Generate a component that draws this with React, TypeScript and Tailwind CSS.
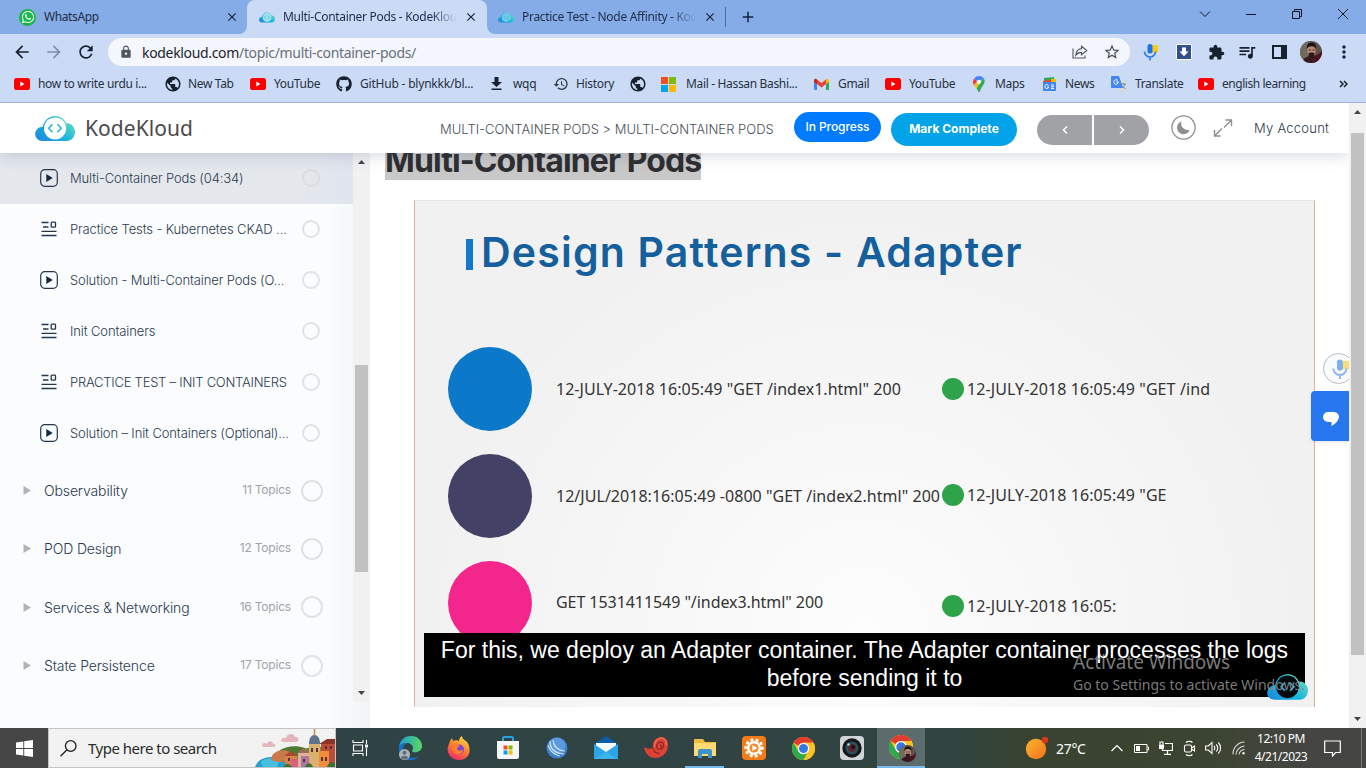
import React, { useId } from "react";
import { FaWhatsapp, FaGithub } from "react-icons/fa";
import {
  MdArrowBack, MdArrowForward, MdRefresh, MdLock, MdStarBorder, MdExtension, MdQueueMusic,
  MdMoreVert, MdPublic, MdHistory, MdClose, MdAdd,
} from "react-icons/md";

/* ---------- shared drawings ---------- */

function Cloud({ className, inner = "#fff" }: { className: string; inner?: string }) {
  const id = useId();
  return (
    <svg className={className} viewBox="0 0 40 25">
      <defs>
        <linearGradient id={id} x1="0" y1="1" x2="1" y2="0.3">
          <stop offset="0" stopColor="#1a86dc" />
          <stop offset="0.55" stopColor="#17b4dc" />
          <stop offset="1" stopColor="#62d8c4" />
        </linearGradient>
      </defs>
      <path d="M7 25a7 7 0 0 1-1-13.900c1-.3 2.500-.3 3-.2A11.500 11.500 0 0 1 31 7.300C36 6.500 40 11 40 16c0 5-3.500 9-8.500 9Z" fill={`url(#${id})`} />
      <circle cx="20" cy="12.300" r="12.200" fill={`url(#${id})`} />
      <circle cx="20" cy="12.400" r="11" fill={inner} />
      <path d="M17.500 8.300 13.700 12.300 17.500 16.300M22.500 8.300l3.800 4-3.800 4" fill="none" stroke="#24b4d8" strokeWidth="1.500" />
    </svg>
  );
}

function YouTube() {
  return (
    <svg className="h-[12px] w-[16px] shrink-0" viewBox="0 0 16 12">
      <rect width="16" height="12" rx="2.500" fill="#f00" />
      <path d="M6.300 3.600v4.800L10.500 6Z" fill="#fff" />
    </svg>
  );
}

function Face({ className }: { className: string }) {
  return (
    <svg className={className} viewBox="0 0 22 22">
      <clipPath id="face"><circle cx="11" cy="11" r="11" /></clipPath>
      <g clipPath="url(#face)">
        <rect width="22" height="22" fill="#5d5149" />
        <path d="M0 0h8v22H0Z" fill="#6f6b5e" />
        <path d="M2 22c1-5 5-7 9-7s9 2 11 7Z" fill="#3a1820" />
        <path d="M14 15c4-1 7-3 8-6v13h-8Z" fill="#4e1420" />
        <ellipse cx="11.500" cy="9.500" rx="4.200" ry="5.700" fill="#b98873" />
        <path d="M6.800 8C6.500 3 9 1.600 12 1.800c3.500.2 4.500 3 4 6.400-1-2.200-2-3-4.500-3-2.200 0-3.700.6-4.700 2.800Z" fill="#1b1413" />
        <path d="M8.500 12c1.500-.8 4.500-.8 6 0l-.8 3.500c-1 1-3.400 1-4.400 0Z" fill="#2b1a18" />
        <path d="M9 9h2M12.500 9h2" stroke="#241513" strokeWidth=".9" />
      </g>
    </svg>
  );
}

function Mic({ className }: { className: string }) {
  return (
    <svg className={className} viewBox="0 0 16 18">
      <rect x="9" y="2" width="6.500" height="7.500" rx="1" fill="#fbc817" />
      <rect x="5" y="1" width="5" height="9.500" rx="2.500" fill="#1a73e8" />
      <path d="M2 8.500a5.500 5.500 0 0 0 11 0M7.500 14v3.500" fill="none" stroke="#2f80ea" strokeWidth="1.700" />
    </svg>
  );
}

function Chrome({ className }: { className: string }) {
  return (
    <svg className={className} viewBox="0 0 24 24">
      <circle cx="12" cy="12" r="12" fill="#fcc31e" />
      <path d="M1.600 6A12 12 0 0 1 22.400 6H12A6 6 0 0 0 6.800 9Z" fill="#e33b2e" />
      <path d="M1.600 6A12 12 0 0 0 12 24l5.200-9A6 6 0 0 1 6.800 15Z" fill="#2da94f" />
      <path d="M22.400 6H12l5.200 9L12 24A12 12 0 0 0 22.400 6Z" fill="#fcc31e" />
      <circle cx="12" cy="12" r="6" fill="#fff" />
      <circle cx="12" cy="12" r="4.700" fill="#3577e5" />
    </svg>
  );
}

/* ---------- browser chrome ---------- */

function TabStrip() {
  return (
    <div className="flex h-[34px] bg-[#cbdbf6] text-[12px] tracking-[-0.3px] text-[#1c2c47]">
      <div className="flex w-[247px] items-center rounded-br-[8px] bg-[#86ace8] pl-[19px]">
        <span className="flex size-[17px] items-center justify-center rounded-full bg-[#18b84b] text-white">
          <FaWhatsapp className="size-[14px]" />
        </span>
        <span className="ml-[8px] w-[181px] text-[12px] tracking-[-0.4px]">WhatsApp</span>
        <MdClose className="size-[14px] text-[#16233a]" />
      </div>
      <div className="flex w-[240px] bg-[#86ace8]">
        <div className="flex w-[240px] items-center rounded-t-[8px] bg-[#cbdbf6] pl-[12px]">
          <Cloud className="h-[11px] w-[16px]" inner="#9fe0f2" />
          <span className="ml-[8px] mr-[7px] w-[174px] overflow-hidden whitespace-nowrap [mask-image:linear-gradient(to_right,black_85%,transparent)]">
            Multi-Container Pods - KodeKloud
          </span>
          <MdClose className="size-[14px] text-[#16233a]" />
        </div>
      </div>
      <div className="flex flex-1 rounded-bl-[8px] bg-[#86ace8]">
        <div className="flex w-[238px] items-center pl-[11px]">
          <Cloud className="h-[11px] w-[16px]" inner="#6fc8ec" />
          <span className="ml-[8px] mr-[7px] w-[174px] overflow-hidden whitespace-nowrap [mask-image:linear-gradient(to_right,black_85%,transparent)]">
            Practice Test - Node Affinity - KodeKloud
          </span>
          <MdClose className="size-[14px] text-[#16233a]" />
        </div>
        <span className="mt-[7px] h-[20px] w-px bg-[#4a6ea8]" />
        <MdAdd className="ml-[13px] mt-[8px] size-[18px] text-[#16233a]" />
        <div className="ml-auto flex items-start pt-[8px] text-[#101828]">
          <svg className="mr-[34px] h-[12px] w-[12px]" viewBox="0 0 12 12" fill="none" stroke="currentColor"><path d="M1 3.500 6 8.500l5-5" /></svg>
          <svg className="mr-[34px] h-[12px] w-[12px]" viewBox="0 0 12 12" fill="none" stroke="currentColor"><path d="M1 6.500h10" /></svg>
          <svg className="mr-[34px] h-[12px] w-[12px]" viewBox="0 0 12 12" fill="none" stroke="currentColor"><path d="M1.500 3.500h7v7h-7ZM3.500 3.500v-2h7v7h-2" /></svg>
          <svg className="mr-[17px] h-[12px] w-[12px]" viewBox="0 0 12 12" fill="none" stroke="currentColor"><path d="m1 1 10 10M11 1 1 11" /></svg>
        </div>
      </div>
    </div>
  );
}

function Toolbar() {
  return (
    <div className="flex h-[36px] items-center bg-[#cbdbf6] pl-[12px] text-[#17202e]">
      <MdArrowBack className="size-[20px]" />
      <MdArrowForward className="ml-[12px] size-[20px] text-[#8090ac]" />
      <MdRefresh className="ml-[12px] size-[20px]" />
      <div className="ml-[12px] flex h-[28px] w-[1022px] items-center rounded-full bg-[#f4f7fd] pl-[11px]">
        <MdLock className="size-[14px] text-[#50555e]" />
        <span className="ml-[9px] text-[14px] tracking-[-0.33px] text-[#6a6f79]">
          <span className="text-[#1e2329]">kodekloud.com</span>/topic/multi-container-pods/
        </span>
        <svg className="ml-auto h-[14px] w-[16px]" viewBox="0 0 16 14" fill="none" stroke="#50555e" strokeWidth="1.100">
          <path d="M1 3.500v9.500h12v-2.500M9.500 1.200l5.300 4.300L9.500 9.800V7.400C6.500 7.400 5 8.400 3.800 10.300 4 6.500 6 4 9.500 3.600Z" />
        </svg>
        <MdStarBorder className="mr-[9px] ml-[15px] size-[18px] text-[#454a53]" />
      </div>
      <Mic className="ml-[12px] h-[18px] w-[17px]" />
      <svg className="ml-[17px] h-[16px] w-[16px]" viewBox="0 0 16 16">
        <rect width="16" height="16" fill="#fff" /><rect x="1" y="1" width="14" height="14" fill="#33508c" />
        <path d="M6 3.500h4v4h2.500L8 12.300 3.500 7.500H6Z" fill="#fff" />
      </svg>
      <MdExtension className="ml-[16px] size-[17px]" />
      <MdQueueMusic className="ml-[12px] size-[20px]" />
      <svg className="ml-[15px] h-[14px] w-[15px]" viewBox="0 0 15 14"><path d="M0 0h15v14H0ZM2 2v10h7V2Z" fill="#17202e" fillRule="evenodd" /></svg>
      <Face className="ml-[13px] size-[22px]" />
      <MdMoreVert className="ml-[12px] size-[20px]" />
    </div>
  );
}

function Bookmark({ icon, label, className }: { icon: React.ReactNode; label?: string; className: string }) {
  return (
    <div className={`flex shrink-0 items-center whitespace-nowrap ${className}`}>
      {icon}
      {label && <span>{label}</span>}
    </div>
  );
}

const Globe = () => <MdPublic className="-mx-[2px] size-[18px] shrink-0 text-[#16202e]" />;

function Bookmarks() {
  return (
    <div className="flex h-[33px] items-center border-b border-[#9fb2d6] bg-[#cbdbf6] pb-[4px] pl-[14px] text-[12px] tracking-[-0.34px] text-[#26303f]">
      <Bookmark className="w-[152px] gap-[8px]" icon={<YouTube />} label="how to write urdu i..." />
      <Bookmark className="w-[84px] gap-[8px]" icon={<Globe />} label="New Tab" />
      <Bookmark className="w-[86px] gap-[8px]" icon={<YouTube />} label="YouTube" />
      <Bookmark className="w-[155px] gap-[8px] tracking-[-0.2px]" icon={<FaGithub className="size-[16px] text-[#16202e]" />} label="GitHub - blynkkk/bl..." />
      <Bookmark className="w-[62px] gap-[11px]" icon={<svg className="h-[14px] w-[11px]" viewBox="0 0 11 14" fill="#16202e"><path d="M3.500 0h4v5H11L5.500 10 0 5h3.500ZM.5 11.500h10v1.500H.5Z" /></svg>} label="wqq" />
      <Bookmark className="w-[78px] gap-[7px]" icon={<MdHistory className="size-[16px] text-[#26303f]" />} label="History" />
      <Bookmark className="w-[30px]" icon={<Globe />} />
      <Bookmark
        className="w-[153px] gap-[10px]"
        icon={<svg className="h-[15px] w-[15px]" viewBox="0 0 15 15"><path d="M0 0h7v7H0Z" fill="#f25022" /><path d="M8 0h7v7H8Z" fill="#7fba00" /><path d="M0 8h7v7H0Z" fill="#00a4ef" /><path d="M8 8h7v7H8Z" fill="#ffb900" /></svg>}
        label="Mail - Hassan Bashi..."
      />
      <Bookmark
        className="w-[71px] gap-[9px]"
        icon={<svg className="h-[12px] w-[15px]" viewBox="0 0 15 12"><path d="M0 2h3v10H1a1 1 0 0 1-1-1Z" fill="#4285f4" /><path d="M12 2h3v9a1 1 0 0 1-1 1h-2Z" fill="#34a853" /><path d="M3 1.500 7.500 5 12 1.500V6L7.500 9.500 3 6Z" fill="#ea4335" /><path d="M12 1.500C13.500 0 15 1 15 2.500V4l-3 2Z" fill="#fbbc04" /><path d="M3 1.500C1.500 0 0 1 0 2.500V4l3 2Z" fill="#c5221f" /></svg>}
        label="Gmail"
      />
      <Bookmark className="w-[88px] gap-[8px]" icon={<YouTube />} label="YouTube" />
      <Bookmark
        className="w-[69px] gap-[10px]"
        icon={<svg className="h-[16px] w-[12px]" viewBox="0 0 12 16"><path d="M6 0a6 6 0 0 1 4.600 2.100L5.900 7.600 1.400 2.200A6 6 0 0 1 6 0Z" fill="#4285f4" /><path d="M1.400 2.200 4 5.500 1 9.200A6 6 0 0 1 1.400 2.200Z" fill="#ea4335" /><path d="M1 9.200 8 4.500l-4.500 8Z" fill="#fbbc04" /><path d="M10.600 2.100C13.500 6.500 10 9 8 12.500 7 14.500 7 16 6 16s-1-2-2.500-3.500Z" fill="#34a853" /><circle cx="6" cy="5.800" r="2.100" fill="#fff" /></svg>}
        label="Maps"
      />
      <Bookmark
        className="w-[69px] gap-[8px]"
        icon={<svg className="h-[14px] w-[15px]" viewBox="0 0 15 14"><path d="M2 1 12 0v6H2Z" fill="#34a853" /><path d="m1 4 13-2v6H1Z" fill="#ea4335" /><path d="M9 2h5v5H9Z" fill="#fbbc04" /><rect x="1" y="5" width="13" height="9" rx="1" fill="#4285f4" /><path d="M6.500 8.500a2 2 0 1 0 .3 1.500H5M9 8h3M9 9.800h3M9 11.500h3" fill="none" stroke="#fff" /></svg>}
        label="News"
      />
      <Bookmark
        className="w-[87px] gap-[8px]"
        icon={<svg className="h-[16px] w-[16px]" viewBox="0 0 16 16"><rect x="7" y="4" width="9" height="12" rx="1" fill="#d5d8dc" /><path d="M0 1a1 1 0 0 1 1-1h7l4 12H1a1 1 0 0 1-1-1Z" fill="#4285f4" /><path d="M7 4.700A2.300 2.300 0 1 0 7.400 6H5" fill="none" stroke="#fff" /><path d="M10 8h5M12.500 7v1M14 8c-.5 2-1.500 3-3 4M11 9.500l3.500 3.500" stroke="#607d9b" fill="none" strokeWidth=".8" /></svg>}
        label="Translate"
      />
      <Bookmark className="w-[141px] gap-[8px] tracking-[-0.45px]" icon={<YouTube />} label="english learning" />
      <svg className="h-[8px] w-[9px]" viewBox="0 0 9 8" fill="none" stroke="#16202e" strokeWidth="1.500"><path d="m1 1 3 3-3 3M5 1l3 3-3 3" /></svg>
    </div>
  );
}

/* ---------- course page ---------- */

function Header() {
  return (
    <header className="relative z-10 flex h-[50px] shrink-0 items-center bg-white font-[Inter,sans-serif] shadow-[0_3px_14px_rgba(60,75,110,0.2)]">
      <Cloud className="ml-[35px] h-[25px] w-[40px]" />
      <span className="ml-[10px] w-[355px] pt-[2px] font-['Noto_Sans',sans-serif] text-[21px] tracking-[0.05px] text-[#4a4a4c]">KodeKloud</span>
      <span className="w-[354px] whitespace-nowrap pt-[3px] text-[13px] font-light tracking-[0.02px] text-[#4a5058]">
        MULTI-CONTAINER PODS &gt; MULTI-CONTAINER PODS
      </span>
      <span className="mb-[2px] flex h-[30px] w-[87px] items-center justify-center rounded-full bg-[#007bff] text-[12px] font-medium tracking-[-0.1px] text-white">In Progress</span>
      <span className="ml-[10px] mt-[2px] flex h-[33px] w-[126px] items-center justify-center rounded-full bg-[#02a3e8] text-[12px] font-bold text-white">Mark Complete</span>
      <div className="ml-[20px] mt-[4px] flex gap-[2px]">
        <span className="flex h-[30px] w-[55px] items-center justify-center rounded-l-full bg-[#a1a2a5]">
          <svg className="h-[8px] w-[6px]" viewBox="0 0 6 8" fill="none" stroke="#fff" strokeWidth="1.500"><path d="M5 .5 1.500 4 5 7.500" /></svg>
        </span>
        <span className="flex h-[30px] w-[55px] items-center justify-center rounded-r-full bg-[#a1a2a5]">
          <svg className="h-[8px] w-[6px]" viewBox="0 0 6 8" fill="none" stroke="#fff" strokeWidth="1.500"><path d="M1 .5 4.500 4 1 7.500" /></svg>
        </span>
      </div>
      <svg className="mb-[2px] ml-[22px] h-[25px] w-[25px]" viewBox="0 0 25 25">
        <circle cx="12.500" cy="12.500" r="11.600" fill="none" stroke="#8e8f92" strokeWidth="1.300" />
        <path d="M10.500 6.500a6.500 6.500 0 0 0 8.200 8.200A6.500 6.500 0 1 1 10.500 6.500Z" fill="#8e8f92" />
      </svg>
      <svg className="mb-[1px] ml-[17px] h-[20px] w-[20px]" viewBox="0 0 20 20" fill="none" stroke="#8e8f92" strokeWidth="1.400">
        <path d="M12.500 2H18.500V8M18 2.500 11 9.500M7.500 18H1.500V12M2 17.500 9 10.500" />
      </svg>
      <span className="ml-[21px] whitespace-nowrap pt-px text-[13px] font-light tracking-[0.25px] text-[#2d3747]">My Account</span>
    </header>
  );
}

const PlayIcon = () => (
  <svg className="h-[18px] w-[18px] shrink-0" viewBox="0 0 18 18">
    <rect x=".7" y=".7" width="16.600" height="16.600" rx="4" fill="none" stroke="#25364d" strokeWidth="1.200" />
    <path d="M6.300 5v8l6.400-4Z" fill="#14253c" />
  </svg>
);
const ListIcon = () => (
  <svg className="h-[16px] w-[18px] shrink-0" viewBox="0 0 18 16" fill="none" stroke="#25364d" strokeWidth="1.300">
    <path d="M1.500 1.500H8.500M3 6H8.500M1.500 10.300h15M1.500 14.500h15" />
    <rect x="11.200" y="1.200" width="4.300" height="5" rx=".8" />
  </svg>
);

const lessons = [
  { play: true, label: "Multi-Container Pods (04:34)", active: true },
  { play: false, label: "Practice Tests - Kubernetes CKAD ..." },
  { play: true, label: "Solution - Multi-Container Pods (O..." },
  { play: false, label: "Init Containers" },
  { play: false, label: "PRACTICE TEST – INIT CONTAINERS", tight: true },
  { play: true, label: "Solution – Init Containers (Optional)..." },
];
const sections = [
  { label: "Observability", topics: "11 Topics" },
  { label: "POD Design", topics: "12 Topics" },
  { label: "Services & Networking", topics: "16 Topics" },
  { label: "State Persistence", topics: "17 Topics" },
];

function Sidebar() {
  return (
    <aside className="flex w-[370px] shrink-0 bg-[linear-gradient(to_right,#fafcfe_325px,#f5f8fb_353px,#f2f4f7)] font-[Inter,sans-serif] text-[#2c3a4e]">
      <div className="w-[353px]">
        {lessons.map((l) => (
          <div key={l.label} className={`flex h-[51px] items-center pb-px pl-[40px] ${l.active ? "bg-[linear-gradient(to_right,#e4e8ed_300px,#e0e4ee)]" : ""}`}>
            {l.play ? <PlayIcon /> : <ListIcon />}
            <span className={`ml-[12px] w-[232px] whitespace-nowrap pt-[2px] text-[13px] font-light ${l.tight ? "tracking-[-0.24px]" : "tracking-[-0.12px]"}`}>{l.label}</span>
            <span className={`size-[18px] rounded-full border-2 ${l.active ? "border-[#dadde2]" : "border-[#e0e2e5]"}`} />
          </div>
        ))}
        <div className="h-[3px]" />
        {sections.map((s) => (
          <div key={s.label} className="flex h-[58.3px] items-center pb-px pl-[23px]">
            <svg className="h-[9px] w-[8px]" viewBox="0 0 8 9"><path d="M.5 0v9L8 4.500Z" fill="#b3b4b7" /></svg>
            <span className="ml-[13px] flex-1 whitespace-nowrap text-[14px] font-light tracking-[-0.13px]">{s.label}</span>
            <span className="mb-px text-[12px] tracking-[-0.2px] text-[#a0a3a8]">{s.topics}</span>
            <span className="ml-[10px] mr-[30px] size-[22px] rounded-full border-2 border-[#e0e2e5]" />
          </div>
        ))}
      </div>
      <div className="flex h-[549px] w-[17px] flex-col items-center bg-[#f1f1f1]">
        <svg className="mt-[7px] h-[4px] w-[7px]" viewBox="0 0 7 4"><path d="M0 4h7L3.500 0Z" fill="#444" /></svg>
        <div className="mt-[201px] h-[207px] w-[13px] bg-[#c1c1c1]" />
        <svg className="mb-[7px] mt-auto h-[4px] w-[7px]" viewBox="0 0 7 4"><path d="M0 0h7L3.500 4Z" fill="#444" /></svg>
      </div>
    </aside>
  );
}

const logs = [
  { dot: "bg-[#0b78ca]", from: '12-JULY-2018 16:05:49 "GET /index1.html" 200', to: '12-JULY-2018 16:05:49 "GET /ind' },
  { dot: "bg-[#444167]", from: '12/JUL/2018:16:05:49 -0800 "GET /index2.html" 200', to: '12-JULY-2018 16:05:49 "GE', shift: "mb-[2px]" },
  { dot: "bg-[#f2268b]", from: 'GET 1531411549 "/index3.html" 200', to: "12-JULY-2018 16:05:", lift: "pb-[2px] tracking-[-0.06px]", shift: "mt-[5px]" },
];

function Slide() {
  return (
    <div className="relative ml-[44px] mt-[20px] h-[507px] w-[901px] overflow-hidden border-x border-t border-x-[#e3b09a] border-t-[#e9e4e3] bg-[radial-gradient(ellipse_at_50%_85%,#fdfdfd_0%,#f6f6f6_40%,#f1f1f1_70%)]">
      <div className="flex items-center pl-[51px] pt-[23px]">
        <span className="mt-[5px] h-[31px] w-[7px] bg-[#1378cc]" />
        <span className="ml-[8px] whitespace-nowrap font-[Inter,sans-serif] text-[41px] font-semibold leading-[56px] tracking-[1.2px] text-[#145f9c]">Design Patterns - Adapter</span>
      </div>
      <div className="mt-[67px] flex flex-col gap-[23px] pl-[33px]">
        {logs.map((l) => (
          <div key={l.from} className="flex h-[84px] items-center whitespace-nowrap text-[16px] tracking-[0.03px] text-[#333]">
            <span className={`size-[84px] rounded-full ${l.dot}`} />
            <span className={`ml-[24px] w-[386px] ${l.lift ?? ""}`}>{l.from}</span>
            <span className={`flex items-center tracking-[0.1px] ${l.shift ?? ""}`}>
              <span className="mr-[3px] size-[22px] rounded-full bg-[#2fa34a]" />
              {l.to}
            </span>
          </div>
        ))}
      </div>
      <div className="absolute left-[9px] top-[432px] h-[64px] w-[881px] whitespace-nowrap bg-black pt-[3px] text-center font-['Liberation_Sans',Arial,sans-serif] text-[23px] leading-[28px] text-white">
        For this, we deploy an Adapter container. The Adapter container processes the logs
        <br />
        before sending it to
      </div>
      <Cloud className="absolute left-[852px] top-[473px] h-[26px] w-[41px]" inner="#020a0e" />
      <div className="absolute left-[658px] top-[447px] whitespace-nowrap text-[#8a8b8b]/90">
        <div className="text-[19px] leading-[28px]">Activate Windows</div>
        <div className="text-[14px] leading-[18px]">Go to Settings to activate Windows.</div>
      </div>
      <span className="absolute bottom-0 left-[-1px] h-[23px] w-px bg-[#555]" />
      <span className="absolute bottom-0 right-[-1px] h-[23px] w-px bg-[#888]" />
    </div>
  );
}

function Page() {
  return (
    <div className="flex h-[625px] bg-white">
      <div className="relative flex w-[1349px] flex-col overflow-hidden">
        <Header />
        <div className="flex min-h-0 flex-1">
          <Sidebar />
          <main className="min-w-0 flex-1">
            <h1 className="ml-[15px] mt-[-12px] h-[39px] w-[316px] whitespace-nowrap bg-[#c8c8c8] font-[Inter,sans-serif] text-[32px] font-bold leading-[39px] tracking-[-0.9px] text-[#2e2e30]">
              Multi-Container Pods
            </h1>
            <Slide />
          </main>
        </div>
        <div className="absolute left-[1323px] top-[250px] flex size-[31px] items-center rounded-full border border-[#b9bcc2] bg-[#fafbfc] pl-[7px]">
          <Mic className="h-[22px] w-[19px] shrink-0 opacity-55" />
        </div>
        <div className="absolute right-0 top-[288px] flex h-[50px] w-[38px] items-center justify-center rounded-l-[4px] bg-[#2777f0] pl-[2px] shadow">
          <svg className="mt-[6px] h-[14px] w-[16px]" viewBox="0 0 16 14"><path d="M5 0h6a5 5 0 0 1 4.700 6.500C14.500 9.500 12 12 8.500 14v-4H5A5 5 0 0 1 5 0Z" fill="#fff" /></svg>
        </div>
      </div>
      <div className="flex w-[17px] flex-col items-center bg-[#f1f1f1]">
        <svg className="mt-[7px] h-[4px] w-[7px]" viewBox="0 0 7 4"><path d="M0 4h7L3.500 0Z" fill="#444" /></svg>
        <div className="mt-[19px] h-[522px] w-[13px] bg-[#c1c1c1]" />
        <svg className="mb-[7px] mt-auto h-[4px] w-[7px]" viewBox="0 0 7 4"><path d="M0 0h7L3.500 4Z" fill="#444" /></svg>
      </div>
    </div>
  );
}

/* ---------- taskbar ---------- */

function Town() {
  return (
    <svg className="ml-auto h-[38px] w-[80px]" viewBox="0 0 80 38">
      <path d="M7 17c0-3 3-4 5-2 1-4 6-3 6 0 3-1 3 3 1 3H8ZM26 12c0-3 3-4 5-3 1-5 8-5 9-1 3-1 5 4 2 5H28Z" fill="#e3b5bd" />
      <path d="M15 38c5-10 12-15 25-16 10-4 25-5 40-4v20Z" fill="#6e8d3a" />
      <path d="M25 21c7-4 16-5 25-2v8H24Z" fill="#4f7a33" />
      <path d="M0 38c3-8 10-10 18-10 10 0 16 5 14 10Z" fill="#2a9fd0" />
      <path d="M6 33c5-5 14-4 18 0l-2 5H8Z" fill="#46bfe2" />
      <path d="M17 27c3-6 12-7 18-4l-2 9c-5 2-12 1-17-1Z" fill="#c9794a" />
      <path d="M30 26h12v12H30Z" fill="#d4834b" /><path d="m29 27 7-5 7 5Z" fill="#a9492f" />
      <path d="M43 23h11v15H43Z" fill="#e0b29a" /><path d="m42 24 6-5 7 5Z" fill="#9d6a58" />
      <path d="M54 15h11v23H54Z" fill="#dcb071" />
      <path d="M54 15c0-7 3-9 5.500-9S65 8 65 15Z" fill="#5f7389" /><path d="M59.500 0v7" stroke="#b98d45" strokeWidth="1.500" />
      <path d="M66 14h14v24H66Z" fill="#bd4c39" /><path d="M64 15 72 10h8v5Z" fill="#8e3328" />
      <path d="M64 22h10v16H64Z" fill="#ef8f3b" /><path d="M46 27h8v11h-8Z" fill="#a9779f" />
      <path d="M36 30h7v8h-7Z" fill="#d7607c" /><path d="M56 19h2v4h-2ZM61 19h2v4h-2ZM66 28h2v4h-2ZM70 28h2v4h-2ZM70 17h2v3h-2ZM75 17h2v3h-2ZM48 30h2v3h-2ZM33 29h2v3h-2Z" fill="#5a3038" />
      <path d="M28 38c2-4 7-4 9 0ZM50 38c2-5 6-5 8 0ZM72 38c2-6 6-6 8-3v3Z" fill="#3e7033" />
    </svg>
  );
}

const apps: { key: string; node: React.ReactNode; className?: string }[] = [
  { key: "edge", node: (
    <svg className="size-[24px]" viewBox="0 0 24 24">
      <defs><linearGradient id="eg" x1="0" x2="1"><stop offset="0" stopColor="#1e9ce0" /><stop offset="1" stopColor="#5bd85a" /></linearGradient></defs>
      <path d="M1 11C2 3 8 0 13 0c7 0 11 5 11 10 0 5-5 7-9 6-2-1 0-2 0-4 0-3-3-5-6-5-4 0-7 2-8 4Z" fill="url(#eg)" />
      <path d="M1 11c1-3 4-4 8-4-4 2-5 6-3 10 3 6 10 6 15 3-3 4-8 5-12 4C3 22 0 17 1 11Z" fill="#1670c8" />
      <circle cx="6.500" cy="18.500" r="5.500" fill="#a9b4bb" /><circle cx="6.500" cy="16.700" r="2" fill="#626d74" /><path d="M3 22c0-3 7-3 7 0-2 2-5 2-7 0Z" fill="#626d74" />
    </svg>) },
  { key: "firefox", node: (
    <svg className="size-[24px]" viewBox="0 0 24 24">
      <defs><linearGradient id="ff" x1=".8" y1="0" x2=".3" y2="1"><stop offset="0" stopColor="#ffe14a" /><stop offset=".45" stopColor="#ff8a2a" /><stop offset="1" stopColor="#f0286b" /></linearGradient></defs>
      <path d="M3 5c1-1 1-2 2-3l1 3c2-1 4-1 6 0 0-2 1-4 3-5 0 3 3 4 5 6 5 7 3 18-8 18C3 24-2 15 2 8Z" fill="url(#ff)" />
      <circle cx="12" cy="13.500" r="5" fill="#7b45d6" /><path d="M5 9c3-2 5 0 7 0 1 2-2 2-2 4 1 2 4 2 6 0 0 4-3 6-6 5-4-1-6-5-5-9Z" fill="#ff7d2b" />
    </svg>) },
  { key: "store", node: (
    <svg className="size-[24px]" viewBox="0 0 24 24">
      <path d="M7 6V2.500C7 1.500 7.500 1 8.500 1h7c1 0 1.500.5 1.500 1.500V6" fill="none" stroke="#29a4e0" strokeWidth="2" />
      <path d="M1 5h22v16a2 2 0 0 1-2 2H3a2 2 0 0 1-2-2Z" fill="#f5f6f7" />
      <path d="M7.500 9.500h4v4h-4Z" fill="#f25022" /><path d="M12.500 9.500h4v4h-4Z" fill="#7fba00" /><path d="M7.500 14.500h4v4h-4Z" fill="#00a4ef" /><path d="M12.500 14.500h4v4h-4Z" fill="#ffb900" />
    </svg>) },
  { key: "disc", node: (
    <svg className="size-[22px]" viewBox="0 0 22 22"><circle cx="11" cy="11" r="10.500" fill="#3c7fcd" /><circle cx="11" cy="9" r="8.500" fill="#5b9ade" /><path d="M4 4c0 7 5 12 14 13C9 17 3 12 4 4ZM7 3c0 7 5 11 12 11C12 13 8 9 7 3ZM2 8c1 6 6 10 12 11C8 17 4 14 2 8Z" fill="#eaf4ff" stroke="#eaf4ff" strokeWidth=".5" /></svg>) },
  { key: "mail", node: (
    <svg className="size-[24px]" viewBox="0 0 24 24"><path d="M0 8 12 0l12 8v4H0Z" fill="#0b5ba8" /><path d="M2 7h20v9H2Z" fill="#f7fafc" /><path d="M0 8v15h24V8L12 16Z" fill="#2aa5e8" /><path d="m12 16 12 7H0Z" fill="#4bc0f4" opacity=".55" /></svg>) },
  { key: "shell", node: (
    <svg className="size-[24px]" viewBox="0 0 24 24"><path d="M0 11c3 2 6 2 9 1-1-6 2-10 8-11 5 0 7 4 7 8 0 8-6 13-13 13C5 22 1 17 0 11Z" fill="#dc4336" /><path d="M17 14c3-2 4-7 0-8-4 0-6 5-3 7 3 1 5-3 2-4M9 12c0 3 3 6 7 5" fill="none" stroke="#8e2420" strokeWidth="1.100" /><path d="M10.500 11c0-5 2-8 6-9 4 0 6 3 6 7" fill="none" stroke="#f07a5e" strokeWidth="1.200" /></svg>) },
  { key: "files", className: "border-b-2 border-[#76b9ed] pt-[2px]", node: (
    <svg className="h-[20px] w-[22px]" viewBox="0 0 22 20"><path d="M0 1h9l2 3h11v14H0Z" fill="#f0bb43" /><path d="M0 5h22v13H0Z" fill="#fcd975" /><path d="M4 20v-7a2 2 0 0 1 2-2h10a2 2 0 0 1 2 2v7h-4v-4H8v4Z" fill="#3c93c9" /></svg>) },
  { key: "player", node: (
    <svg className="size-[24px]" viewBox="0 0 24 24"><rect width="24" height="24" rx="4" fill="#f47b16" /><circle cx="12" cy="12" r="8.300" fill="none" stroke="#fff" strokeWidth="3" strokeLinecap="round" strokeDasharray="0.500 4.714" /><circle cx="12" cy="12" r="7" fill="#fff" /><circle cx="12" cy="12" r="4.600" fill="#f58a2c" /><path d="M10.300 9v6l5-3Z" fill="#fff" /></svg>) },
  { key: "chrome", node: <Chrome className="size-[23px]" /> },
  { key: "camera", node: (
    <svg className="size-[24px]" viewBox="0 0 24 24"><rect width="24" height="24" rx="4" fill="#d3d4d6" /><circle cx="12" cy="12" r="9.700" fill="#17181b" /><circle cx="12" cy="12" r="6.500" fill="#27535c" /><circle cx="12" cy="12" r="4" fill="#5b2630" /><circle cx="13" cy="11" r="2" fill="#101114" /><circle cx="8.500" cy="8.500" r="1.300" fill="#b9d4de" /></svg>) },
];

function Taskbar() {
  return (
    <div className="flex h-[40px] bg-[linear-gradient(to_right,#2f4345_25%,#314442_60%,#31443f_70%,#39432f_76%,#3b4430_88%,#454543_96%)] text-white">
      <div className="flex w-[48px] items-center justify-center bg-[#464646]">
        <svg className="size-[17px]" viewBox="0 0 17 17" fill="#fff"><path d="M0 2.400 7.300 1.400V8H0ZM8.200 1.200 17 0v8H8.200ZM0 9h7.300v6.600L0 14.600ZM8.200 9H17v8l-8.800-1.200Z" /></svg>
      </div>
      <div className="flex w-[288px] items-center border border-[#c4c4c4] bg-[#f2f2f2] pl-[11px]">
        <svg className="h-[17px] w-[17px]" viewBox="0 0 17 17" fill="none" stroke="#1c1c1c" strokeWidth="1.300"><circle cx="10.700" cy="6" r="5.300" /><path d="m7 9.800-6.500 6.500" /></svg>
        <span className="ml-[11px] whitespace-nowrap text-[15px] tracking-[-0.5px] text-[#2a2a2a]">Type here to search</span>
        <Town />
      </div>
      <div className="flex w-[49px] items-center justify-center">
        <svg className="h-[16px] w-[17px]" viewBox="0 0 17 16" fill="none" stroke="#fff" strokeWidth="1.100"><path d="M1 0v2.500h10V0M1 16v-2.500h10V16M1.500 5h9v6h-9ZM14.500 0v4M14.500 8v8" /><path d="M13 4.500h3v3h-3Z" fill="#fff" stroke="none" /></svg>
      </div>
      {apps.map((a) => (
        <div key={a.key} className="flex w-[49.2px] items-center justify-center">
          <div className={`flex h-[40px] w-[39px] shrink-0 items-center justify-center ${a.className ?? ""}`}>{a.node}</div>
        </div>
      ))}
      <div className="flex w-[48px] items-center justify-center border-b-2 border-[#76b9ed] bg-[#5c6b6b]">
        <div className="relative size-[24px]">
          <Chrome className="size-[24px]" />
          <Face className="absolute -bottom-[3px] -right-[3px] size-[17px]" />
        </div>
      </div>
      <div className="ml-auto flex items-center">
        <svg className="size-[24px]" viewBox="0 0 24 24"><defs><linearGradient id="sun" x1="0" y1="0" x2="1" y2="1"><stop offset="0" stopColor="#fdb52c" /><stop offset="1" stopColor="#f2711c" /></linearGradient></defs><circle cx="11" cy="13" r="10.200" fill="url(#sun)" /><circle cx="20" cy="4" r="3.200" fill="#d13a21" /></svg>
        <span className="ml-[7px] w-[55px] text-[14px] tracking-[-0.3px]">27°C</span>
        <svg className="h-[8px] w-[12px]" viewBox="0 0 12 8" fill="none" stroke="#fff" strokeWidth="1.200"><path d="m.5 7 5.500-5.500L11.500 7" /></svg>
        <svg className="ml-[11px] h-[9px] w-[15px]" viewBox="0 0 15 9"><path d="M.5.500h12.500v8H.500ZM13.500 3H14.500v3h-1" fill="none" stroke="#fff" /><path d="M2 2h4v5H2Z" fill="#fff" /></svg>
        <svg className="ml-[9px] h-[14px] w-[15px]" viewBox="0 0 15 14" fill="none" stroke="#fff" strokeWidth="1.200"><path d="M7 2.500h7.500v7H4.500V8M9.500 9.500V13M6 13.300h7" /><path d="M1 3.500h5V8H1Z" fill="#fff" stroke="none" /><path d="M2 3.500V1h3v2.500" /></svg>
        <svg className="ml-[10px] h-[17px] w-[13px]" viewBox="0 0 13 17" fill="none" stroke="#fff" strokeWidth="1.100"><rect x="1.500" y="5" width="7" height="7" rx="1.500" /><path d="m8.500 8 3-2v5l-3-2M3 2.500c1.500-1.500 5-1.500 6.500 0M3 14.500c1.500 1.500 5 1.500 6.500 0" /></svg>
        <svg className="ml-[9px] h-[14px] w-[17px]" viewBox="0 0 17 14" fill="none" stroke="#fff" strokeWidth="1.100"><path d="M.6 5h2.700L7 1.500v11L3.300 9H.6ZM9 5c1 1 1 3 0 4M11.200 3.300c2 2 2 5.400 0 7.400M13.300 1.500c3 3 3 8 0 11" /></svg>
        <svg className="ml-[10px] h-[14px] w-[13px]" viewBox="0 0 13 14" fill="none" stroke="#ddd" strokeWidth="1.100"><path d="M1 13.500A12 12 0 0 1 12.500 1M4 13.500A9 9 0 0 1 12.500 5M7 13.500A6 6 0 0 1 12.500 8.500" /><circle cx="11.500" cy="12.300" r="1.200" fill="#fff" stroke="none" /></svg>
        <div className="ml-[9px] w-[54px] whitespace-nowrap text-center text-[12px] leading-[18px] tracking-[-0.5px]">
          <div>12:10 PM</div>
          <div>4/21/2023</div>
        </div>
        <svg className="ml-[16px] mr-[20px] h-[17px] w-[17px]" viewBox="0 0 17 17" fill="none" stroke="#fff" strokeWidth="1.200"><path d="M.7 1h15.600v11.500h-4.600L8.500 16v-3.500H.7Z" /></svg>
        <span className="mr-[4px] h-[40px] w-px bg-[#7c7c7a]" />
      </div>
    </div>
  );
}

export default function App() {
  return (
    <div className="h-[768px] w-[1366px] overflow-hidden bg-white font-['Noto_Sans','Open_Sans',sans-serif]">
      <TabStrip />
      <Toolbar />
      <Bookmarks />
      <Page />
      <Taskbar />
    </div>
  );
}
